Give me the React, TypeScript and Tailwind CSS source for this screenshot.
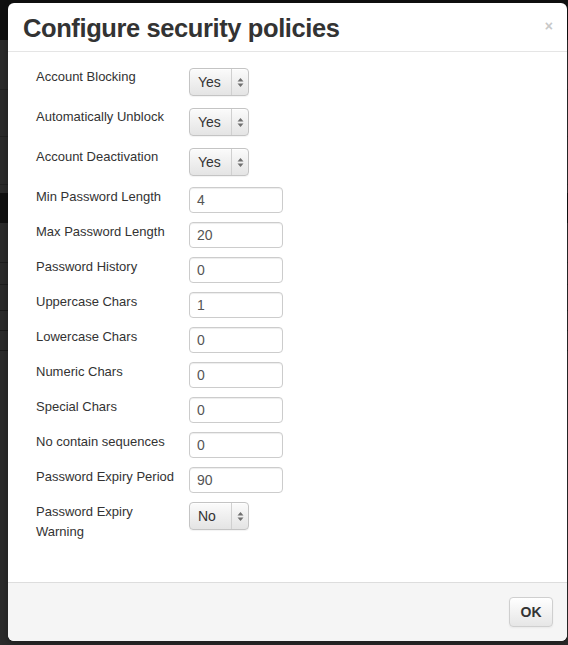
import React from "react";

const font = { fontFamily: '"Liberation Sans", Arial, Helvetica, sans-serif' };

function SelectBox({ value }: { value: string }) {
  return (
    <div className="flex h-[28px] w-[60px] rounded-[4px] border border-[#c4c4c4] bg-gradient-to-b from-[#fbfbfb] to-[#e4e4e4] shadow-[inset_0_1px_1px_rgba(255,255,255,0.8),0_1px_1px_rgba(0,0,0,0.05)]">
      <div className="flex w-[41px] items-center pl-[8px] text-[14px] text-[#333]">{value}</div>
      <div className="flex flex-1 items-center justify-center border-l border-[#d0d0d0]">
        <svg width="7" height="11" viewBox="0 0 7 11">
          <path d="M3.5 1 L6.5 4.5 L0.5 4.5 Z" fill="#6f6f6f" />
          <path d="M3.5 10 L6.5 6.5 L0.5 6.5 Z" fill="#6f6f6f" />
        </svg>
      </div>
    </div>
  );
}

function InputBox({ value }: { value: string }) {
  return (
    <div className="flex h-[26px] w-[94px] items-center rounded-[4px] border border-[#cccccc] bg-white pl-[7px] text-[14px] text-[#555] shadow-[inset_0_1px_1px_rgba(0,0,0,0.075)]">
      {value}
    </div>
  );
}

type Row = { label: React.ReactNode; kind: "select" | "input"; value: string; h: string };

const rows: Row[] = [
  { label: "Account Blocking", kind: "select", value: "Yes", h: "h-[40px]" },
  { label: "Automatically Unblock", kind: "select", value: "Yes", h: "h-[40px]" },
  { label: "Account Deactivation", kind: "select", value: "Yes", h: "h-[39px]" },
  { label: "Min Password Length", kind: "input", value: "4", h: "h-[35px]" },
  { label: "Max Password Length", kind: "input", value: "20", h: "h-[35px]" },
  { label: "Password History", kind: "input", value: "0", h: "h-[35px]" },
  { label: "Uppercase Chars", kind: "input", value: "1", h: "h-[35px]" },
  { label: "Lowercase Chars", kind: "input", value: "0", h: "h-[35px]" },
  { label: "Numeric Chars", kind: "input", value: "0", h: "h-[35px]" },
  { label: "Special Chars", kind: "input", value: "0", h: "h-[35px]" },
  { label: "No contain sequences", kind: "input", value: "0", h: "h-[35px]" },
  { label: "Password Expiry Period", kind: "input", value: "90", h: "h-[35px]" },
  {
    label: (
      <>
        Password Expiry
        <br />
        Warning
      </>
    ),
    kind: "input",
    value: "No",
    h: "h-[44px]",
  },
];

export default function App() {
  return (
    <div className="relative h-[645px] w-[568px] overflow-hidden bg-[#2b2b2b]" style={font}>
      {/* background page behind overlay */}
      <div className="flex h-full w-full flex-col">
        <div className="h-[40px] bg-[#0f0f0f]" />
        <div className="h-[50px] border-b border-[#222]" />
        <div className="h-[47px] border-b border-[#222]" />
        <div className="h-[48px] border-b border-[#222]" />
        <div className="h-[8px]" />
        <div className="h-[30px] bg-[#111]" />
        <div className="h-[40px] border-b border-[#1e1e1e]" />
        <div className="h-[22px] border-b border-[#1e1e1e]" />
        <div className="h-[26px] border-b border-[#1a1a1a]" />
        <div className="h-[20px] border-b border-[#1a1a1a]" />
        <div className="h-[20px] border-b border-[#1a1a1a]" />
      </div>

      {/* modal */}
      <div className="absolute left-[8px] top-[3px] flex h-[638px] w-[559px] flex-col overflow-hidden rounded-[6px] bg-white shadow-[0_3px_7px_rgba(0,0,0,0.3)]">
        <div className="flex h-[49px] shrink-0 items-center justify-between border-b border-[#e5e5e5] pl-[15px] pr-[14px]">
          <h3 className="mt-[2px] text-[25.5px] font-bold leading-[30px] tracking-[-0.4px] text-[#333]">
            Configure security policies
          </h3>
          <span className="mb-[2px] text-[14px] font-bold leading-none text-[#c8c8c8]">×</span>
        </div>

        <div className="flex flex-1 flex-col pl-[28px] pt-[16px]">
          {rows.map((r, i) => (
            <div key={i} className={`flex items-start ${r.h}`}>
              <div
                className={
                  i < 3
                    ? "-mt-[1px] w-[153px] text-[13px] leading-[20px] text-[#333]"
                    : "mt-0 w-[153px] text-[13px] leading-[20px] text-[#333]"
                }
              >
                {r.label}
              </div>
              {i < 3 || i === 12 ? <SelectBox value={r.value} /> : <InputBox value={r.value} />}
            </div>
          ))}
        </div>

        <div className="flex h-[59px] shrink-0 items-center justify-end border-t border-[#dddddd] bg-[#f5f5f5] pr-[14px]">
          <button className="h-[30px] w-[44px] rounded-[4px] border border-[#cfcfcf] bg-gradient-to-b from-white to-[#e6e6e6] text-[14px] font-bold text-[#333] shadow-[inset_0_1px_0_rgba(255,255,255,0.2),0_1px_2px_rgba(0,0,0,0.05)]">
            OK
          </button>
        </div>
      </div>
    </div>
  );
}
